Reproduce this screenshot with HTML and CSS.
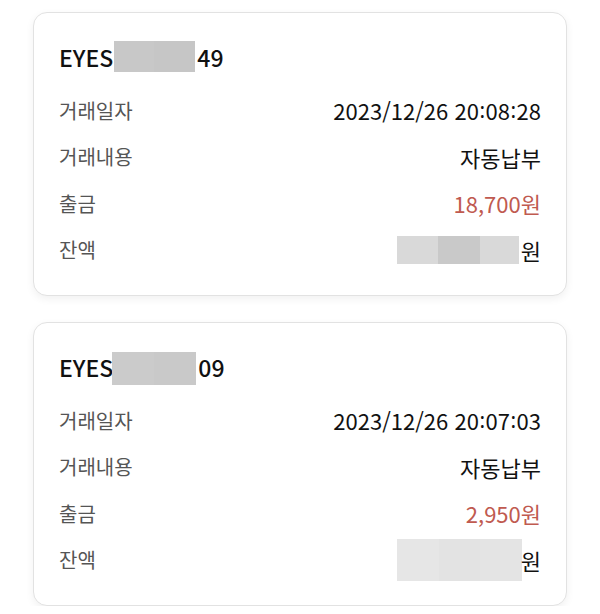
FILE: index.html
```html
<!DOCTYPE html>
<html lang="ko">
<head>
<meta charset="utf-8">
<link rel="stylesheet" href="styles.css">
</head>
<body>
<div class="list">
  <div class="card">
    <div class="title">EYES<span class="mask mask-title"><i class="s1"></i><i class="s2"></i></span>49</div>
    <div class="row"><span class="label">거래일자</span><span class="value">2023/12/26 20<span class="colon">:</span>08<span class="colon">:</span>28</span></div>
    <div class="row"><span class="label">거래내용</span><span class="value">자동납부</span></div>
    <div class="row"><span class="label">출금</span><span class="value red">18,700원</span></div>
    <div class="row"><span class="label">잔액</span><span class="value"><span class="mask mask-bal"><i class="b1"></i><i class="b2"></i><i class="b3"></i></span>원</span></div>
  </div>
  <div class="card">
    <div class="title">EYES<span class="mask mask-title2"><i class="t1"></i><i class="t2"></i></span>09</div>
    <div class="row"><span class="label">거래일자</span><span class="value">2023/12/26 20<span class="colon">:</span>07<span class="colon">:</span>03</span></div>
    <div class="row"><span class="label">거래내용</span><span class="value">자동납부</span></div>
    <div class="row"><span class="label">출금</span><span class="value red">2,950원</span></div>
    <div class="row"><span class="label">잔액</span><span class="value"><span class="mask mask-bal2"><i class="c1"></i><i class="c2"></i><i class="c3"></i></span>원</span></div>
  </div>
</div>
</body>
</html>
```
FILE: styles.css
```css
html, body {
  margin: 0;
  padding: 0;
  background: #ffffff;
}
body {
  font-family: "Noto Sans CJK KR", "Noto Sans", sans-serif;
  color: #111;
}
.list {
  display: flex;
  flex-direction: column;
  gap: 26px;
  padding: 12px 33px 0 33px;
}
.card {
  height: 284px;
  box-sizing: border-box;
  border: 1px solid #e2e2e2;
  border-radius: 14px;
  background: #fff;
  box-shadow: 0 3px 8px rgba(0, 0, 0, 0.06);
  padding: 28px 25px 22px 25px;
  display: flex;
  flex-direction: column;
}
.title {
  font-size: 23px;
  font-weight: 500;
  line-height: 32px;
  height: 32px;
  display: flex;
  align-items: center;
  margin-bottom: 14px;
  color: #111;
}
.mask {
  display: inline-flex;
}
.mask i {
  display: block;
  height: 100%;
}
.mask-title {
  width: 81px;
  height: 31px;
  margin: 0 2px 0 1px;
  position: relative;
  top: -1px;
}
.mask-title .s1 { width: 40px; background: #c8c8c8; }
.mask-title .s2 { width: 41px; background: #c6c6c6; }
.mask-title2 {
  width: 84px;
  height: 33px;
  margin: 0 2px 0 -1px;
  position: relative;
  top: 1px;
}
.mask-title2 .t1 { width: 42px; background: #cbcbcb; }
.mask-title2 .t2 { width: 42px; background: #c9c9c9; }
.row {
  height: 47px;
  display: flex;
  align-items: center;
  justify-content: space-between;
}
.label {
  font-size: 20px;
  color: #555;
}
.value {
  font-size: 22px;
  color: #111;
  display: flex;
  align-items: center;
  white-space: pre;
}
.colon {
  font-family: "Noto Sans", sans-serif;
  font-size: 21px;
  margin: 0 0.5px;
}
.red {
  color: #c05a50;
}
.mask-bal {
  width: 122px;
  height: 28px;
  margin-right: 2px;
}
.mask-bal .b1 { width: 41px; background: #d9d9d9; }
.mask-bal .b2 { width: 42px; background: #c9c9c9; }
.mask-bal .b3 { width: 39px; background: #d9d9d9; }
.mask-bal2 {
  width: 125px;
  height: 42px;
  margin-right: -1px;
}
.mask-bal2 .c1 { width: 42px; background: #e6e6e6; }
.mask-bal2 .c2 { width: 41px; background: #e3e3e3; }
.mask-bal2 .c3 { width: 42px; background: #e4e4e4; }
```
